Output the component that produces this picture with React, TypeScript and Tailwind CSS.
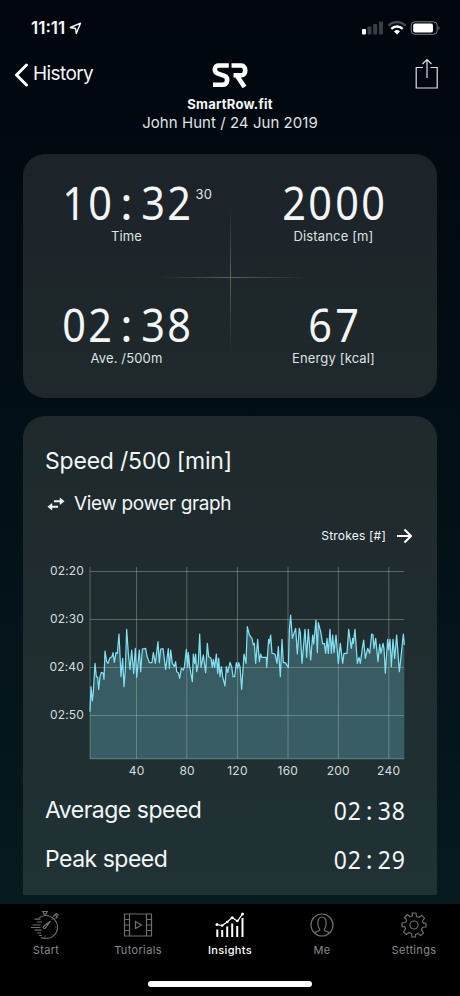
import React from "react";

const LINE =
  "0,485 3,410 7,453 10,425 15,340 19,380 23,382 26,418 30,380 34,367 40,370 42,388 45,303 50,335 54,340 59,325 66,320 69,308 73,337 78,308 82,310 87,252 93,380 98,325 102,410 106,360 110,238 115,310 120,358 125,300 131,370 136,295 140,382 148,300 152,365 157,297 167,295 171,318 178,338 186,338 190,308 196,340 204,275 208,338 212,297 219,296 227,358 235,296 238,355 242,300 247,340 253,350 257,335 260,365 265,368 269,385 274,355 280,360 283,352 289,298 293,352 295,308 299,350 307,395 310,312 314,340 317,312 320,365 325,340 329,252 333,352 340,315 347,368 352,280 356,320 363,325 367,352 370,328 374,352 379,312 383,370 386,325 390,380 394,350 398,380 405,408 409,350 413,368 420,337 425,350 429,380 434,380 439,338 443,355 446,338 450,350 455,418 462,312 468,340 472,230 478,255 486,265 490,285 493,280 497,340 503,268 508,335 512,312 515,322 529,322 530,352 536,268 538,280 542,255 546,310 555,312 561,340 565,290 571,380 576,268 580,338 586,338 595,353 598,240 602,195 607,265 612,250 617,235 622,312 628,235 631,250 636,340 645,238 650,322 655,238 662,330 668,255 671,282 678,210 682,308 685,218 692,245 698,282 703,280 707,310 711,265 715,310 720,238 724,310 728,255 732,308 738,255 745,340 751,280 758,340 762,310 771,310 776,238 784,295 788,265 790,280 795,238 802,340 807,322 811,340 817,295 821,270 826,325 833,295 839,310 845,252 849,255 852,295 857,265 864,335 869,282 873,310 879,280 882,295 886,370 893,268 896,300 900,268 904,350 909,268 914,325 920,255 928,365 933,320 940,252 943,285";

function Clock({ value, cell }: { value: string; cell: string }) {
  return (
    <>
      {value.split("").map((c, i) => (
        <span key={i} className={`inline-block text-center ${c === ":" ? "" : "scale-x-90"} ${cell}`}>
          {c}
        </span>
      ))}
    </>
  );
}

function Metric({ value, label, sup }: { value: string; label: string; sup?: string }) {
  return (
    <div className="flex flex-col items-center">
      <div className="relative h-[46px] font-['Noto_Sans',sans-serif] text-[46px] leading-[46px] whitespace-nowrap">
        <Clock value={value} cell="w-[26.4px]" />
        {sup && (
          <span className="absolute top-[7px] left-full ml-[3px] font-[Inter,sans-serif] text-[13px] leading-[16px] tracking-[0.2px] text-[#dfe3e5]">
            {sup}
          </span>
        )}
      </div>
      <div className="mt-[2px] text-[13px] leading-[18px] tracking-[0.15px] text-[#dde2e3]">{label}</div>
    </div>
  );
}

function Chart() {
  return (
    <svg className="block h-[194px] w-[316px]" viewBox="0 0 316 194">
      <g transform="translate(1 -16) scale(0.33333)">
        <polygon points={`0,627 ${LINE} 943,627`} fill="#62a8b5" fillOpacity="0.38" />
      </g>
      <g stroke="#a9c0b9" strokeOpacity="0.4" strokeWidth="1">
        <path d="M1 5.5H315M1 53.5H315M1 101.5H315M1 149.5H315M1 192.8H315" />
        <path d="M1 1V193M47.5 1V193M97.8 1V193M148.5 1V193M199 1V193M249.4 1V193M299.8 1V193" />
      </g>
      <g transform="translate(1 -16) scale(0.33333)">
        <polyline points={LINE} fill="none" stroke="#83e0f1" strokeWidth="3.7" strokeLinejoin="round" />
      </g>
    </svg>
  );
}

function StartIcon() {
  return (
    <svg viewBox="0 0 30 30" className="size-[30px]" fill="none" stroke="currentColor" strokeWidth="1.2">
      <path d="M11 1.5h6M12 1.5l.7 2.5h2.6l.7-2.5M14 4v1.5" />
      <path d="M14 5.5A12 12 0 0 1 23 9a11.2 11.2 0 0 1-9 19.3c-1.7 0-3-.3-4-.8M8 8.2c1.700-1.700 3.600-2.500 6-2.700" />
      <path d="M22 6.500l2-2 2.500 2.500-2 1.500M24 4.500l1.500-1 2 2" />
      <path d="M12.500 16.500l7-5.500-5.200 7.200c-1.400 1-2.800-.5-1.800-1.700Z" />
      <path d="M3.500 9.200h6M6 12h5M1.500 15h8M0 17.500h9.500M3.500 20.200h7M6 23h4M8 25.500h3" />
      <path d="M14 25.500v2M24 17h1.500M20.500 24l1 1M20.500 10l1-1" strokeWidth=".8" />
    </svg>
  );
}

function TutorialsIcon() {
  return (
    <svg viewBox="0 0 30 26" className="h-[26px] w-[30px]" fill="none" stroke="currentColor" strokeWidth="1.2">
      <path d="M1.500 2h27v22h-27zM6.500 2v22M23.500 2v22M1.500 7.500h5M1.500 13h5M1.500 18.500h5M23.500 7.500h5M23.500 13h5M23.500 18.500h5" />
      <path d="M12.500 9.500v7l6-3.500z" />
    </svg>
  );
}

function InsightsIcon() {
  return (
    <svg viewBox="0 0 30 26" className="h-[26px] w-[30px]" fill="none" stroke="currentColor">
      <path
        d="M2.300 17.500V25M7.200 18V25M12.200 14.500V25M17.200 11.500V25M22.200 14V25M27.500 6V25"
        strokeWidth="2"
      />
      <path d="M1.800 12.500l5.400 1L12.200 10l5-4.500 5.300 3.700 5-7.200" strokeWidth="1.200" />
      <g fill="currentColor" stroke="none">
        <circle cx="2" cy="12.500" r="1.500" />
        <circle cx="7.200" cy="13.500" r="1.300" />
        <circle cx="12.200" cy="10" r="1.300" />
        <circle cx="17.200" cy="5.800" r="1.500" />
        <circle cx="22.300" cy="9" r="1.300" />
        <circle cx="27.500" cy="2" r="1.500" />
      </g>
    </svg>
  );
}

function MeIcon() {
  return (
    <svg viewBox="0 0 26 26" className="size-[26px]" fill="none" stroke="currentColor" strokeWidth="1.2">
      <circle cx="13" cy="13" r="11" />
      <path d="M5.500 21c.7-1.800 5.200-1.500 5.200-3.300 0-1.400-1.500-2-1.700-4.500C8.500 8 9.500 5 13 5s4.500 3 4 8.200c-.2 2.500-1.700 3.100-1.700 4.500 0 1.800 4.500 1.500 5.200 3.300" />
    </svg>
  );
}

function SettingsIcon() {
  return (
    <svg viewBox="0 0 26 26" className="size-[26px]" fill="none" stroke="currentColor" strokeWidth="1.2">
      {/* Eight square teeth joined by concave notches around a hub */}
      <path
        strokeLinejoin="round"
        d="M11 1h4l.5 3.500 2.300 1 2.900-2.200 2.800 2.800-2.100 2.900 1 2.300L25 11v4l-3.600.5-1 2.400 2.100 2.900-2.800 2.800-2.800-2.100-2.400 1L14.500 25h-3.500l-.5-3.500-2.400-1-2.800 2.100-2.800-2.800 2.100-2.900-1-2.400L1 15v-4l3.600-.5 1-2.300-2.100-2.900 2.800-2.800 2.900 2.200 2.300-1Z"
      />
      <circle cx="13" cy="13" r="4" />
    </svg>
  );
}

const TABS = [
  { label: "Start", icon: <StartIcon /> },
  { label: "Tutorials", icon: <TutorialsIcon /> },
  { label: "Insights", icon: <InsightsIcon />, active: true },
  { label: "Me", icon: <MeIcon /> },
  { label: "Settings", icon: <SettingsIcon /> },
];

export default function App() {
  return (
    <div className="flex h-[996px] w-[460px] flex-col overflow-hidden bg-linear-to-b from-[#01060e] to-[#071c20] font-[Inter,sans-serif] text-[#f3f6f7]">
      <header className="h-[154px] shrink-0">
        <div className="flex h-[56px] items-center justify-between pr-[20px] pl-[31px]">
          <div className="flex items-center gap-[4px]">
            <span className="text-[17px] leading-[20px] font-semibold">11:11</span>
            <svg width="13" height="13" viewBox="0 0 13 13" fill="none" stroke="currentColor" strokeWidth="1.400" strokeLinejoin="round">
              <path d="M11.500 1.200L7.300 11.500 6.500 6.500 1.300 5.500z" />
            </svg>
          </div>
          <svg width="80" height="16" viewBox="0 0 80 16">
            <g fill="#3a3e44">
              <rect x="7.500" y="6.500" width="4" height="8" rx="1" />
              <rect x="13.200" y="4" width="4" height="10.500" rx="1" />
              <rect x="19" y="1.500" width="4" height="13" rx="1" />
            </g>
            <rect x="2" y="9" width="4" height="5.500" rx="1" fill="#fff" />
            <g fill="none" strokeWidth="2.300">
              <path d="M28.500 5.700a12 12 0 0 1 17 0" stroke="#4b4f54" />
              <path d="M31.300 8.900a8 8 0 0 1 11.400 0" stroke="#fff" />
            </g>
            <path d="M34 11.400a4.400 4.400 0 0 1 6 0L37 14.500z" fill="#fff" />
            <rect x="51.200" y="1.800" width="26" height="12.500" rx="3.700" fill="none" stroke="#7c8085" />
            <rect x="53.200" y="3.500" width="19.800" height="9" rx="2" fill="#fff" />
            <path d="M78.500 6c1.300.5 1.300 3.600 0 4.100z" fill="#7c8085" />
          </svg>
        </div>
        <div className="grid grid-cols-[130px_1fr_130px]">
          <div className="flex h-[37px] items-center gap-[5px] pl-[14px]">
            <svg width="15" height="24" viewBox="0 0 15 24" fill="none" stroke="#fff" strokeWidth="3" strokeLinecap="round" strokeLinejoin="round">
              <path d="M12.500 2L2.500 12l10 10" />
            </svg>
            <span className="-ml-px text-[19px] tracking-[-0.6px]">History</span>
          </div>
          <div className="flex flex-col items-center pt-[7px]">
            <svg width="36" height="25" viewBox="0 0 36 25" fill="none" stroke="#fff" strokeWidth="4.600">
              <path d="M16.800 2.500H7C1.800 2.500 1.500 9.200 6 10.600l6.500 2.200c4.300 1.700 3.200 9-1.700 9H1" strokeWidth="4.600" />
              <path d="M19.500 2.500h9.700c5.400 0 5.400 9.800 0 9.800h-7.700M24.500 12l8 12" />
            </svg>
            <div className="mt-[9px] text-[13px] leading-[15px] font-bold tracking-[0.25px]">SmartRow.fit</div>
            <div className="mt-[2px] text-[15px] leading-[18px] tracking-[0.05px] whitespace-nowrap text-[#dfe4e8]">
              John Hunt / 24 Jun 2019
            </div>
          </div>
          <div className="flex justify-end pr-[21px]">
            <svg width="24" height="34" viewBox="0 0 24 34" fill="none" stroke="#dfe2e5" strokeWidth="1.200">
              <path d="M8 11.500H1.200V32h21V11.500h-6.700M12 22V4M7.500 8L12 3.500 16.500 8" />
            </svg>
          </div>
        </div>
      </header>

      <section className="relative mx-[23px] grid h-[244px] shrink-0 grid-cols-2 grid-rows-[122px_122px] rounded-[22px] bg-linear-to-b from-[#1c2329] to-[#1f292b] pt-[25px]">
        <Metric value="10:32" label="Time" sup="30" />
        <Metric value="2000" label="Distance [m]" />
        <Metric value="02:38" label="Ave. /500m" />
        <Metric value="67" label="Energy [kcal]" />
        <div className="absolute top-[52px] left-[207px] h-[145px] w-px bg-linear-to-b from-transparent via-[#59605f] to-transparent" />
        <div className="absolute top-[123px] left-[137px] h-px w-[146px] bg-linear-to-r from-transparent via-[#59605f] to-transparent" />
      </section>

      <section className="mx-[23px] mt-[18px] h-[479px] shrink-0 rounded-t-[22px] bg-linear-to-b from-[#1f292c] to-[#203234] px-[22px] pt-[29px]">
        <h2 className="text-[23px] leading-[32px] tracking-[-0.2px]">Speed /500 [min]</h2>
        <div className="mt-[14px] flex h-[26px] items-center">
          <svg width="18" height="16" viewBox="0 0 18 16" className="ml-[2px]" fill="currentColor">
            <path d="M7 4.300h5.800V1.500L17.500 5.300l-4.700 3.800V6.300H7zM11 9.700H5.200V6.900L.5 10.700l4.700 3.800v-2.800H11z" />
          </svg>
          <span className="ml-[9px] text-[19px] tracking-[-0.37px]">View power graph</span>
        </div>
        <div className="mt-[9px] flex h-[20px] items-center justify-end gap-[11px] pr-[3px]">
          <span className="text-[12px] tracking-[0.2px]">Strokes [#]</span>
          <svg width="15" height="16" viewBox="0 0 15 16" fill="none" stroke="#fff" strokeWidth="2">
            <path d="M0 8h13.500M7.500 1.500L14 8l-6.500 6.500" />
          </svg>
        </div>
        <div className="flex">
          <div className="mr-[5px] w-[39px] pt-px text-right text-[12px] leading-[48px] tracking-[0.15px] text-[#d6dddd]">
            <div>02:20</div>
            <div>02:30</div>
            <div>02:40</div>
            <div>02:50</div>
          </div>
          <div className="pt-[20px]">
            <Chart />
          </div>
        </div>
        <div className="-mr-[20px] flex h-[22px] pl-[66.500px] text-[12px] leading-[22px] tracking-[0.2px] text-[#d6dddd]">
          {[40, 80, 120, 160, 200, 240].map((n) => (
            <span key={n} className="w-[50.400px] shrink-0 text-center">
              {n}
            </span>
          ))}
        </div>
        <div className="mt-[4px] pr-[9px]">
          {[
            ["Average speed", "02:38"],
            ["Peak speed", "02:29"],
          ].map(([k, v]) => (
            <div key={k} className="flex h-[49px] items-center justify-between">
              <span className="text-[23px] tracking-[-0.5px]">{k}</span>
              <span className="font-['Noto_Sans',sans-serif] text-[25.500px] leading-[45px]">
                <Clock value={v} cell="w-[14.700px]" />
              </span>
            </div>
          ))}
        </div>
      </section>

      <nav className="mt-auto h-[92px] shrink-0 bg-black">
        <div className="grid grid-cols-5">
          {TABS.map((t) => (
            <div key={t.label} className={`flex flex-col items-center ${t.active ? "text-white" : "text-[#8a8a8a]"}`}>
              <div className={`flex h-[39px] items-center justify-center pt-[3px] ${t.active ? "" : "opacity-80"}`}>{t.icon}</div>
              <span className={`text-[11px] leading-[14px] tracking-[0.35px] ${t.active ? "font-medium" : ""}`}>{t.label}</span>
            </div>
          ))}
        </div>
        <div className="mx-auto mt-[24px] h-[6px] w-[164px] rounded-full bg-white" />
      </nav>
    </div>
  );
}
